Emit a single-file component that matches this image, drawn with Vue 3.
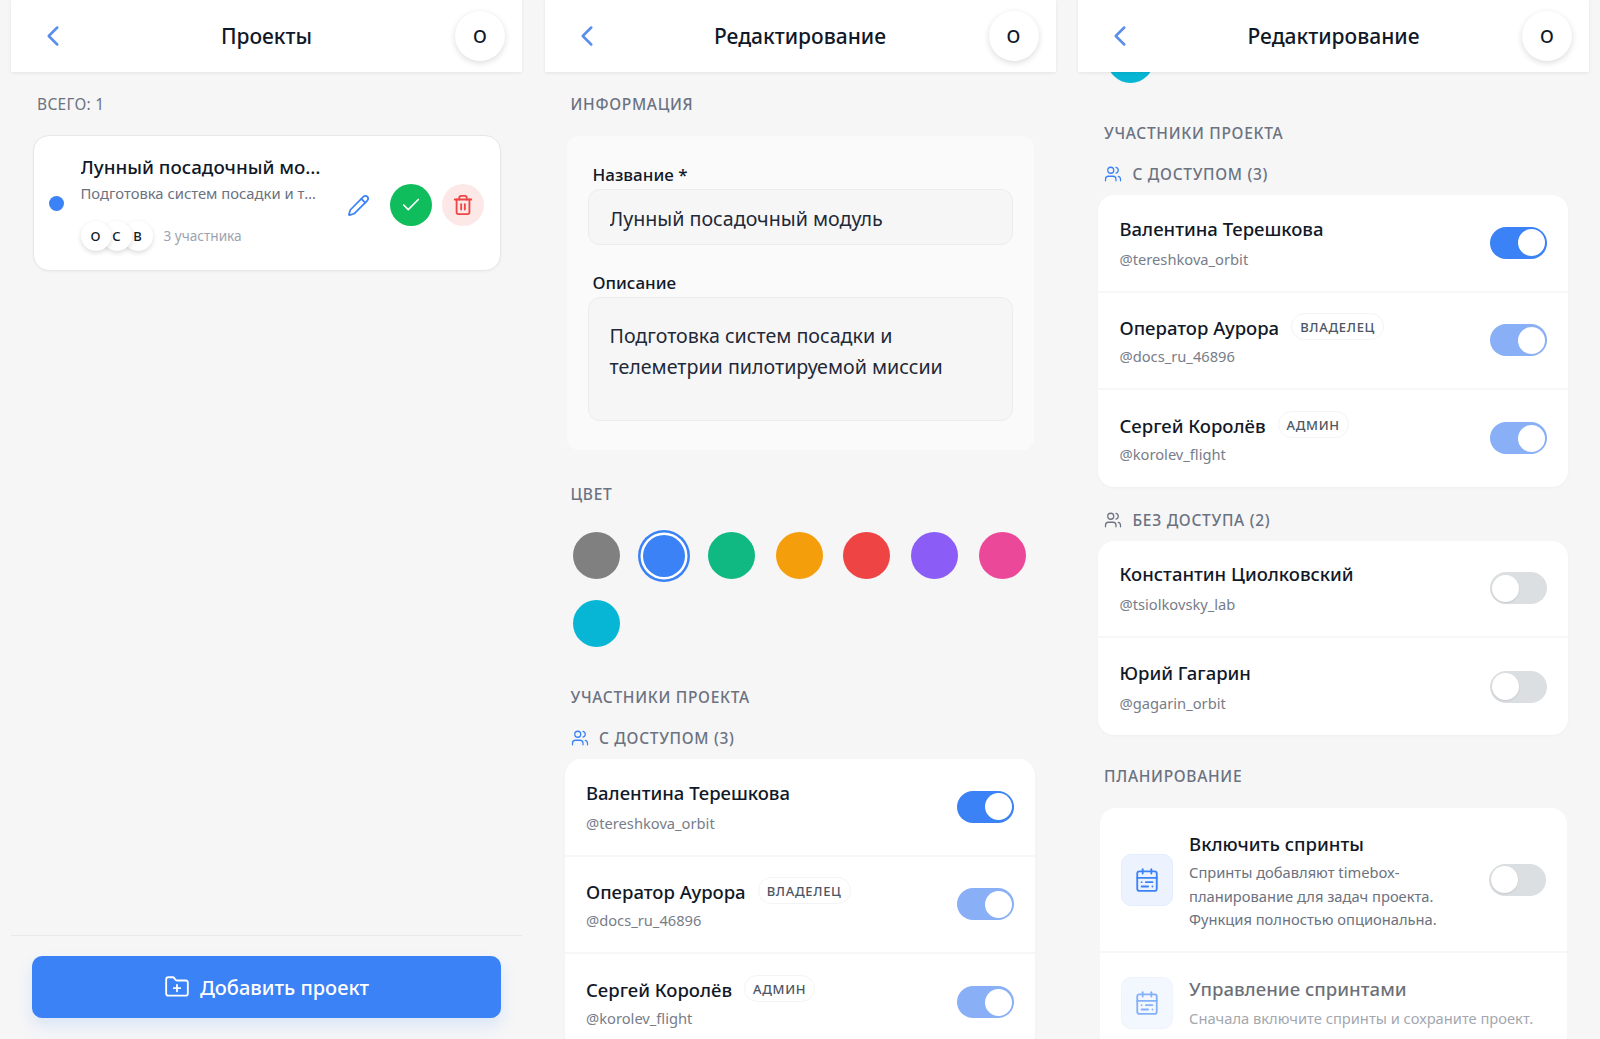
<script setup>
import { ref, onMounted } from 'vue'

const colors = ['#808080', '#3b82f6', '#10b981', '#f59e0b', '#ef4444', '#8b5cf6', '#ec4899', '#06b6d4']

const withAccess = [
  { name: 'Валентина Терешкова', handle: '@tereshkova_orbit', on: true },
  { name: 'Оператор Аурора', handle: '@docs_ru_46896', badge: 'ВЛАДЕЛЕЦ', on: true, locked: true },
  { name: 'Сергей Королёв', handle: '@korolev_flight', badge: 'АДМИН', on: true, locked: true }
]

const noAccess = [
  { name: 'Константин Циолковский', handle: '@tsiolkovsky_lab', on: false },
  { name: 'Юрий Гагарин', handle: '@gagarin_orbit', on: false }
]

const groups = [
  { title: 'С ДОСТУПОМ (3)', active: true, members: withAccess },
  { title: 'БЕЗ ДОСТУПА (2)', active: false, members: noAccess }
]

const editScreens = [{ id: 'top', scroll: 0 }, { id: 'scrolled', scroll: 564 }]

const scrollers = ref([])

onMounted(() => {
  scrollers.value.forEach((el) => {
    el.scrollTop = Number(el.dataset.scroll)
  })
})
</script>

<template>
  <div class="page">
    <section class="panel">
      <header class="topbar">
        <svg class="back" viewBox="0 0 24 24"><path d="m15 18-6-6 6-6" /></svg>
        <h1>Проекты</h1>
        <div class="avatar">О</div>
      </header>

      <div class="list">
        <div class="section-title total">ВСЕГО: 1</div>
        <div class="project">
          <span class="dot"></span>
          <div class="project-body">
            <div class="project-name">Лунный посадочный модуль</div>
            <div class="project-desc">Подготовка систем посадки и телеметрии пилотируемой миссии</div>
            <div class="project-people">
              <span v-for="(l, i) in ['О', 'С', 'В']" :key="l" class="mini" :style="{ zIndex: 3 - i }">{{ l }}</span>
              <span class="people-count">3 участника</span>
            </div>
          </div>
          <div class="actions">
            <button class="act edit">
              <svg viewBox="0 0 24 24"><path d="M21.174 6.812a1 1 0 0 0-3.986-3.987L3.842 16.174a2 2 0 0 0-.5.83l-1.321 4.352a.5.5 0 0 0 .623.622l4.353-1.32a2 2 0 0 0 .83-.497z" /><path d="m15 5 4 4" /></svg>
            </button>
            <button class="act ok">
              <svg viewBox="0 0 24 24"><path d="M20 6 9 17l-5-5" /></svg>
            </button>
            <button class="act del">
              <svg viewBox="0 0 24 24"><path d="M3 6h18" /><path d="M19 6v14c0 1-1 2-2 2H7c-1 0-2-1-2-2V6" /><path d="M8 6V4c0-1 1-2 2-2h4c1 0 2 1 2 2v2" /><path d="M10 11v6" /><path d="M14 11v6" /></svg>
            </button>
          </div>
        </div>
      </div>

      <footer class="footer">
        <button class="add">
          <svg viewBox="0 0 24 24"><path d="M12 10v6" /><path d="M9 13h6" /><path d="M20 20a2 2 0 0 0 2-2V8a2 2 0 0 0-2-2h-7.9a2 2 0 0 1-1.69-.9L9.6 3.9A2 2 0 0 0 7.93 3H4a2 2 0 0 0-2 2v13a2 2 0 0 0 2 2Z" /></svg>
          Добавить проект
        </button>
      </footer>
    </section>

    <section v-for="screen in editScreens" :key="screen.id" class="panel">
      <header class="topbar">
        <svg class="back" viewBox="0 0 24 24"><path d="m15 18-6-6 6-6" /></svg>
        <h1>Редактирование</h1>
        <div class="avatar">О</div>
      </header>

      <div ref="scrollers" class="scroller" :data-scroll="screen.scroll">
        <div class="section-title">ИНФОРМАЦИЯ</div>
        <div class="info-card">
          <label class="field-label">Название *</label>
          <input class="field" value="Лунный посадочный модуль" readonly />
          <label class="field-label second">Описание</label>
          <textarea class="field area" readonly>Подготовка систем посадки и телеметрии пилотируемой миссии</textarea>
        </div>

        <div class="section-title color-title">ЦВЕТ</div>
        <div class="swatches">
          <span
            v-for="(c, i) in colors"
            :key="c"
            class="swatch"
            :class="{ selected: i === 1 }"
            :style="{ background: c }"
          ></span>
        </div>

        <div class="section-title members-title">УЧАСТНИКИ ПРОЕКТА</div>
        <template v-for="g in groups" :key="g.title">
          <div class="group-title" :class="{ active: g.active }">
            <svg viewBox="0 0 24 24"><path d="M16 21v-2a4 4 0 0 0-4-4H6a4 4 0 0 0-4 4v2" /><circle cx="9" cy="7" r="4" /><path d="M22 21v-2a4 4 0 0 0-3-3.87" /><path d="M16 3.13a4 4 0 0 1 0 7.75" /></svg>
            <span>{{ g.title }}</span>
          </div>
          <div class="members">
            <div v-for="m in g.members" :key="m.handle" class="member">
              <div class="member-text">
                <div class="member-line" :class="{ plain: !m.badge }">
                  <span class="member-name">{{ m.name }}</span>
                  <span v-if="m.badge" class="badge">{{ m.badge }}</span>
                </div>
                <div class="handle">{{ m.handle }}</div>
              </div>
              <span class="toggle" :class="{ on: m.on, locked: m.locked }"><i></i></span>
            </div>
          </div>
        </template>

        <div class="section-title plan-title">ПЛАНИРОВАНИЕ</div>
        <div class="plan-card">
          <div class="plan-row">
            <div class="plan-icon">
              <svg viewBox="0 0 24 24"><rect x="3" y="4" width="18" height="18" rx="2" /><path d="M16 2v4" /><path d="M8 2v4" /><path d="M3 10h18" /><path d="M17 14h-6" /><path d="M13 18H7" /><path d="M7 14h.01" /><path d="M17 18h.01" /></svg>
            </div>
            <div class="plan-text">
              <div class="plan-name">Включить спринты</div>
              <div class="plan-desc">Спринты добавляют timebox-планирование для задач проекта. Функция полностью опциональна.</div>
            </div>
            <span class="toggle"><i></i></span>
          </div>
          <div class="plan-row muted">
            <div class="plan-icon">
              <svg viewBox="0 0 24 24"><rect x="3" y="4" width="18" height="18" rx="2" /><path d="M16 2v4" /><path d="M8 2v4" /><path d="M3 10h18" /><path d="M17 14h-6" /><path d="M13 18H7" /><path d="M7 14h.01" /><path d="M17 18h.01" /></svg>
            </div>
            <div class="plan-text">
              <div class="plan-name">Управление спринтами</div>
              <div class="plan-desc nowrap">Сначала включите спринты и сохраните проект.</div>
            </div>
          </div>
        </div>
      </div>
    </section>
  </div>
</template>

<style>
html, body {
  margin: 0;
  background: #f6f6f7;
}
</style>

<style scoped>
.page {
  display: flex;
  gap: 22.5px;
  height: 1039px;
  padding: 0 11px;
  overflow: hidden;
  background: #f6f6f7;
  color: #111827;
  font-family: "Noto Sans", "Open Sans", sans-serif;
}

.panel {
  width: 511px;
  flex: none;
  display: flex;
  flex-direction: column;
  min-height: 0;
}

svg {
  fill: none;
  stroke: currentColor;
  stroke-linecap: round;
  stroke-linejoin: round;
  stroke-width: 2;
}

/* header */
.topbar {
  position: relative;
  z-index: 2;
  flex: none;
  height: 72px;
  display: grid;
  grid-template-columns: 1fr auto 1fr;
  align-items: center;
  padding: 0 17px 0 25px;
  background: #fff;
  box-shadow: 0 1px 3px rgba(0, 0, 0, 0.08);
}

.topbar h1 {
  margin: 0;
  font-size: 21px;
  font-weight: 500;
  transform: translateX(-4px);
}

.back {
  width: 34px;
  height: 34px;
  color: #5b8ded;
  stroke-width: 1.8;
}

.avatar {
  justify-self: end;
  width: 50px;
  height: 50px;
  border-radius: 50%;
  background: #fff;
  display: flex;
  align-items: center;
  justify-content: center;
  font-size: 18px;
  font-weight: 500;
  box-shadow: 0 2px 6px rgba(0, 0, 0, 0.14);
}

.section-title {
  margin-left: 26px;
  font-size: 15.5px;
  line-height: 20px;
  font-weight: 500;
  letter-spacing: 0.7px;
  color: #6b7280;
}

/* project list */
.list {
  flex: 1;
  padding-top: 22px;
}

.total {
  font-weight: 400;
  letter-spacing: 0.3px;
}

.project {
  display: flex;
  align-items: center;
  margin: 21px 21.5px 0;
  height: 136px;
  box-sizing: border-box;
  padding: 0 16px 0 15.5px;
  background: #fff;
  border: 1px solid #e5e7eb;
  border-radius: 16px;
  box-shadow: 0 1px 3px rgba(0, 0, 0, 0.04);
}

.dot {
  flex: none;
  width: 15px;
  height: 15px;
  border-radius: 50%;
  background: #3b82f6;
  margin-right: 16.5px;
}

.project-body {
  width: 244px;
  flex: none;
  padding-bottom: 2px;
}

.project-name,
.project-desc {
  white-space: nowrap;
  overflow: hidden;
  text-overflow: ellipsis;
}

.project-name {
  font-size: 18.8px;
  line-height: 26px;
  font-weight: 500;
}

.project-desc {
  margin-top: 2px;
  width: 238px;
  font-size: 14.8px;
  line-height: 22px;
  color: #6b7280;
}

.project-people {
  display: flex;
  align-items: center;
  margin-top: 17px;
}

.mini {
  position: relative;
  width: 30px;
  height: 30px;
  margin-right: -9px;
  border-radius: 50%;
  background: #fff;
  display: flex;
  align-items: center;
  justify-content: center;
  font-size: 13px;
  font-weight: 500;
  box-shadow: 0 2px 5px rgba(0, 0, 0, 0.14);
}

.people-count {
  margin-left: 20px;
  font-size: 13.6px;
  color: #9ca3af;
}

.actions {
  margin-left: auto;
  margin-top: 4px;
  display: flex;
  gap: 10px;
}

.act {
  width: 42px;
  height: 42px;
  padding: 0;
  border: none;
  border-radius: 50%;
  background: none;
  display: flex;
  align-items: center;
  justify-content: center;
}

.act svg {
  width: 22px;
  height: 22px;
}

.edit {
  color: #3b82f6;
}

.edit svg {
  width: 23px;
  height: 23px;
  stroke-width: 1.8;
}

.ok {
  background: #10bd5c;
  color: #fff;
}

.ok svg {
  stroke-width: 1.8;
}

.del {
  background: #fde8e8;
  color: #ef4444;
}

.footer {
  flex: none;
  border-top: 1px solid #e8e9eb;
  padding: 20px 21px 21px;
}

.add {
  width: 100%;
  height: 62px;
  border: none;
  border-radius: 10px;
  background: #3b82f6;
  color: #fff;
  font: 500 20px "Noto Sans", sans-serif;
  display: flex;
  align-items: center;
  justify-content: center;
  gap: 10px;
  box-shadow: 0 8px 16px rgba(59, 130, 246, 0.14);
}

.add svg {
  width: 26px;
  height: 26px;
  stroke-width: 1.7;
}

/* edit form */
.scroller {
  flex: 1;
  min-height: 0;
  overflow: hidden;
  padding: 22px 0 60px;
}

.info-card {
  margin: 22px 22px 0;
  padding: 28px 21px 29px;
  background: #fafafb;
  border-radius: 12px;
}

.field-label {
  display: block;
  padding-left: 5px;
  font-size: 17px;
  line-height: 22px;
  font-weight: 500;
  margin-bottom: 3px;
}

.second {
  margin-top: 27px;
}

.field {
  display: block;
  width: 100%;
  height: 56px;
  box-sizing: border-box;
  padding: 3px 21px 0;
  background: #f6f6f7;
  border: 1.5px solid #ececee;
  border-radius: 12px;
  color: #1f2937;
  font: 400 19.65px "Noto Sans", sans-serif;
  outline: none;
  resize: none;
}

.area {
  height: 124px;
  padding: 22px 21px;
  line-height: 31px;
  overflow: hidden;
}

.color-title {
  margin-top: 34px;
}

.swatches {
  display: flex;
  flex-wrap: wrap;
  gap: 21px 20.6px;
  margin: 28px 0 0 28.5px;
  width: 453px;
}

.swatch {
  width: 47px;
  height: 47px;
  border-radius: 50%;
}

.selected {
  box-shadow: 0 0 0 2.5px #fff, 0 0 0 5px #3b82f6;
  width: 42px;
  height: 42px;
  margin: 2.5px;
}

.members-title {
  margin-top: 39.5px;
}

.group-title {
  display: flex;
  align-items: center;
  gap: 10.5px;
  margin: 21.5px 0 0 26px;
  font-size: 15.5px;
  line-height: 20px;
  font-weight: 500;
  letter-spacing: 0.7px;
  color: #6b7280;
}

.group-title svg {
  width: 18px;
  height: 18px;
  stroke-width: 1.7;
}

.group-title.active svg {
  color: #3b82f6;
}

.members {
  margin: 11px 21px 0 20px;
  background: #fff;
  border-radius: 16px;
  box-shadow: 0 1px 3px rgba(0, 0, 0, 0.03);
}

.members + .group-title {
  margin-top: 23px;
}

.member {
  display: flex;
  align-items: center;
  justify-content: space-between;
  height: 97px;
  box-sizing: border-box;
  padding: 0 21px 0 21.5px;
  border-bottom: 2px solid #f7f7f8;
}

.member:first-child {
  height: 97.5px;
}

.member:last-child {
  border-bottom: none;
}

.member-line {
  display: flex;
  align-items: center;
  gap: 12px;
  height: 28px;
}

.member-line.plain {
  align-items: flex-start;
}

.member-name {
  font-size: 18.5px;
  line-height: 24px;
  font-weight: 500;
}

.handle {
  margin-top: 4px;
  font-size: 14.7px;
  line-height: 20px;
  color: #777d89;
}

.badge {
  height: 27px;
  box-sizing: border-box;
  padding: 0 8px;
  display: flex;
  align-items: center;
  margin-top: -3px;
  border: 1px solid #f3f4f6;
  border-radius: 14px;
  font-size: 13px;
  font-weight: 500;
  letter-spacing: 0.7px;
  color: #4b5563;
}

.toggle {
  flex: none;
  position: relative;
  width: 57px;
  height: 32px;
  border-radius: 16px;
  background: #dcdfe1;
}

.toggle i {
  position: absolute;
  left: 2px;
  top: 2.5px;
  width: 27px;
  height: 27px;
  border-radius: 50%;
  background: #fff;
  box-shadow: 0 1px 2px rgba(0, 0, 0, 0.1);
}

.toggle.on {
  background: #3b82f6;
}

.toggle.on i {
  left: 28px;
  box-shadow: none;
}

.toggle.locked {
  background: #89aff6;
}

.plan-title {
  margin-top: 31px;
}

.plan-card {
  margin: 22px 22px 0;
  background: #fff;
  border-radius: 16px;
}

.plan-row {
  display: flex;
  align-items: center;
  gap: 16px;
  padding: 20px 21px 19px;
  border-bottom: 2px solid #f7f7f8;
}

.plan-row:last-child {
  border-bottom: none;
}

.plan-icon {
  flex: none;
  width: 52px;
  height: 52px;
  box-sizing: border-box;
  border-radius: 10px;
  border: 1px solid #e4edfc;
  background: #edf3fe;
  color: #3b82f6;
  display: flex;
  align-items: center;
  justify-content: center;
}

.plan-icon svg {
  width: 26px;
  height: 26px;
  stroke-width: 1.7;
}

.plan-text {
  flex: 1;
  min-width: 0;
  margin-top: 3px;
}

.plan-name {
  font-size: 18.6px;
  line-height: 26px;
  font-weight: 500;
}

.plan-desc {
  margin-top: 4px;
  width: 260px;
  font-size: 14.7px;
  line-height: 23.5px;
  color: #6b7280;
}

.nowrap {
  width: auto;
  white-space: nowrap;
}

.muted {
  padding-top: 23px;
  padding-bottom: 24px;
}

.muted .plan-text {
  margin-top: 0;
}

.muted .plan-desc {
  margin-top: 5px;
}

.muted .plan-icon,
.muted .plan-text {
  opacity: 0.62;
}
</style>
